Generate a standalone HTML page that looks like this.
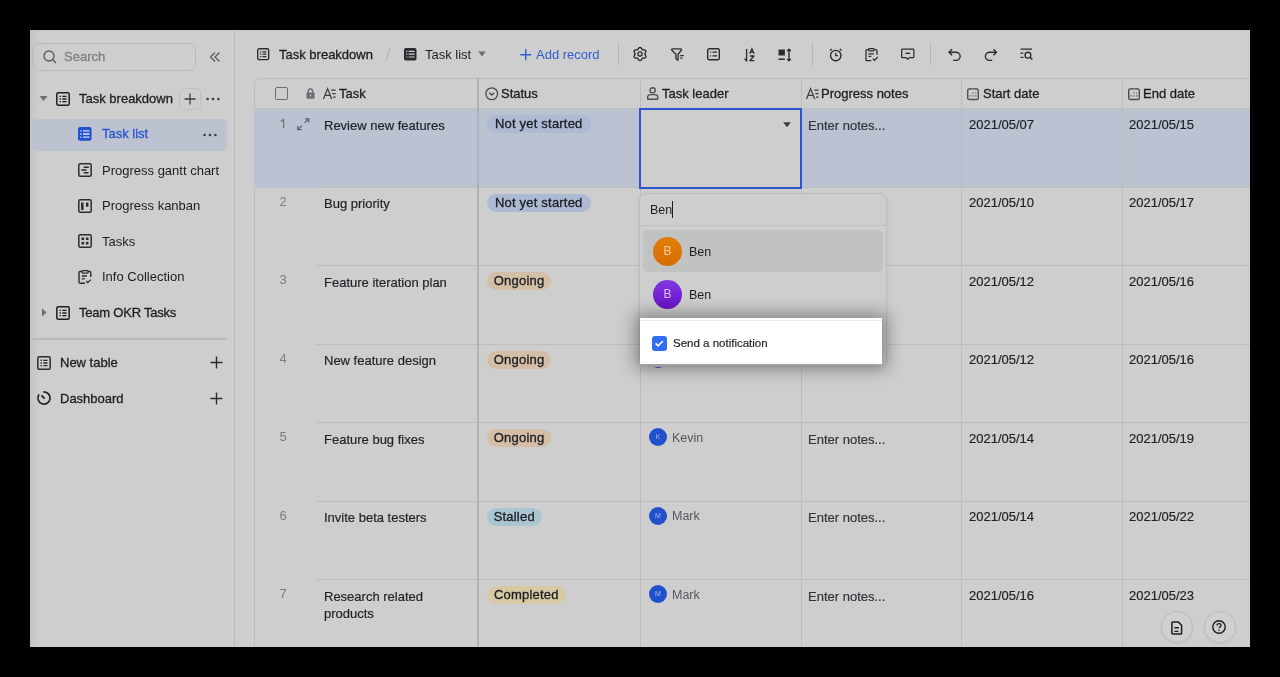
<!DOCTYPE html>
<html><head><meta charset="utf-8">
<style>
*{box-sizing:border-box;margin:0;padding:0}
html,body{width:1280px;height:677px;overflow:hidden;background:#000}
body{-webkit-font-smoothing:antialiased;font-family:"Liberation Sans",sans-serif;font-size:13px;color:#1c1e22;position:relative}
.a{position:absolute;white-space:nowrap;line-height:16px;will-change:transform}
#app{position:absolute;left:30px;top:30px;width:1220px;height:617px;background:#cecece;overflow:hidden}
#side{position:absolute;left:30px;top:30px;width:205px;height:617px;background:linear-gradient(90deg,#c3c3c3 0,#c8c8c8 4px,#cdcdcd 9px,#cecece 14px);border-right:1.5px solid #b9b9b9}
.med{-webkit-text-stroke:0.3px currentColor}
svg.i{position:absolute;overflow:visible;fill:none;stroke:#2a2c30;stroke-width:1.4}
.si{color:#2a2c30}

.hl{width:940px;height:1px;background:#bdbdbd}
.vl{top:77.5px;width:1px;height:570px;background:#bdbdbd}
.num{width:24px;text-align:center;color:#7a7d82;font-size:13px}
.tt{color:#1f2226;-webkit-text-stroke:0.2px currentColor}
.hd{color:#1c1e22}
.badge{height:18px;line-height:18px;padding:0;text-align:center;border-radius:9px;letter-spacing:0.2px;-webkit-text-stroke:0.32px currentColor;color:#1c1e22}
.av{width:18px;height:18px;border-radius:50%;background:#2150cc;color:#a8bde8;font-size:7px;line-height:18px;text-align:center}
.ld{color:#55585e;font-size:12.5px}
.bav{width:28px;height:28px;border-radius:50%;color:#f2c9a0;font-size:12px;line-height:28px;text-align:center}
.fb{width:32px;height:32px;border-radius:50%;border:1px solid #babcc0;background:#d0d0d0;box-shadow:0 1px 3px rgba(0,0,0,0.06)}
</style></head><body>

<div id="app"></div>
<div id="side"></div>
<div class="a" style="left:30px;top:30px;width:1220px;height:1px;background:#c3c4c8"></div>

<!-- search -->
<div class="a" style="left:32px;top:42.5px;width:163.5px;height:28.3px;border:1.5px solid #b9babe;border-radius:7px"></div>
<svg class="i" style="left:43px;top:50px" width="14" height="14" viewBox="0 0 14 14"><circle cx="6" cy="6" r="5" stroke="#5a5d63" stroke-width="1.4"/><path d="M9.8 9.8 L13 13" stroke="#5a5d63" stroke-width="1.5"/></svg>
<div class="a med" style="left:64.3px;top:49px;color:#7e8187">Search</div>
<svg class="i" style="left:209px;top:51px" width="12" height="12" viewBox="0 0 12 12"><path d="M6 1.5 L1.5 6 L6 10.5 M10.5 1.5 L6 6 L10.5 10.5" stroke="#5a5d63" stroke-width="1.3"/></svg>

<!-- Task breakdown -->
<svg style="position:absolute;left:39px;top:95px" width="9" height="7" viewBox="0 0 9 7"><path d="M0.5 1 L8.5 1 L4.5 6 Z" fill="#6b6e74"/></svg>
<svg class="i" style="left:56px;top:92px" width="14" height="14" viewBox="0 0 14 14"><rect x="0.8" y="0.8" width="12.4" height="12.4" rx="1.5" stroke="#1c1e22" stroke-width="1.5"/><path d="M3.5 4.3h1.4M6.3 4.3h4.2M3.5 7h1.4M6.3 7h4.2M3.5 9.7h1.4M6.3 9.7h4.2" stroke="#1c1e22" stroke-width="1.3"/></svg>
<div class="a med" style="left:78.5px;top:91px">Task breakdown</div>
<div class="a" style="left:179px;top:88px;width:21.5px;height:21.5px;border:1.5px solid #bfc0c3;border-radius:5px"></div>
<svg class="i" style="left:183.5px;top:92.5px" width="12" height="12" viewBox="0 0 12 12"><path d="M6 0.5V11.5M0.5 6H11.5" stroke="#3a3d42" stroke-width="1.3"/></svg>
<svg style="position:absolute;left:206px;top:97px" width="14" height="4" viewBox="0 0 14 4"><circle cx="1.6" cy="2" r="1.3" fill="#3a3d42"/><circle cx="7" cy="2" r="1.3" fill="#3a3d42"/><circle cx="12.4" cy="2" r="1.3" fill="#3a3d42"/></svg>

<!-- Task list selected -->
<div class="a" style="left:32px;top:118.5px;width:195px;height:31.5px;background:#bcc2d0;border-radius:5px"></div>
<svg class="i" style="left:77.5px;top:127.2px" width="14" height="14" viewBox="0 0 14 14"><rect x="0" y="0" width="13.6" height="13.8" rx="2" fill="#2152d4" stroke="none"/><path d="M2.2 3.9h1.3M5 3.9h6.5M2.2 7h1.3M5 7h6.5M2.2 10.1h1.3M5 10.1h6.5" stroke="#d9e0f0" stroke-width="1.3"/></svg>
<div class="a med" style="left:101.5px;top:126.3px;color:#2853d2">Task list</div>
<svg style="position:absolute;left:203px;top:132.5px" width="14" height="4" viewBox="0 0 14 4"><circle cx="1.6" cy="2" r="1.3" fill="#3a3d42"/><circle cx="7" cy="2" r="1.3" fill="#3a3d42"/><circle cx="12.4" cy="2" r="1.3" fill="#3a3d42"/></svg>

<!-- gantt -->
<svg class="i" style="left:77.5px;top:163px" width="14" height="14" viewBox="0 0 14 14"><rect x="0.8" y="0.8" width="12.4" height="12.4" rx="1.5" stroke="#2a2c30" stroke-width="1.5"/><path d="M5.6 4.3h5.2M3.4 7h5.1M5.8 9.7h4.7" stroke="#2a2c30" stroke-width="1.5"/></svg>
<div class="a" style="left:101.5px;top:162.5px">Progress gantt chart</div>
<!-- kanban -->
<svg class="i" style="left:77.5px;top:198.5px" width="14" height="14" viewBox="0 0 14 14"><rect x="0.8" y="0.8" width="12.4" height="12.4" rx="1.5" stroke="#2a2c30" stroke-width="1.5"/><path d="M4.3 3.6v7.3M9.2 3.6v4.2" stroke="#2a2c30" stroke-width="2.5"/></svg>
<div class="a" style="left:101.5px;top:198px">Progress kanban</div>
<!-- tasks -->
<svg class="i" style="left:77.5px;top:234px" width="14" height="14" viewBox="0 0 14 14"><rect x="0.8" y="0.8" width="12.4" height="12.4" rx="1.5" stroke="#2a2c30" stroke-width="1.5"/><rect x="3.5" y="3.5" width="2.6" height="2.6" fill="#2a2c30" stroke="none"/><rect x="7.9" y="3.5" width="2.6" height="2.6" fill="#2a2c30" stroke="none"/><rect x="3.5" y="7.9" width="2.6" height="2.6" fill="#2a2c30" stroke="none"/><rect x="7.9" y="7.9" width="2.6" height="2.6" fill="#2a2c30" stroke="none"/></svg>
<div class="a" style="left:101.5px;top:233.5px">Tasks</div>
<!-- info -->
<svg class="i" style="left:77.5px;top:270px" width="14" height="14" viewBox="0 0 14 14"><path d="M4 1.5H2.2C1.5 1.5 1 2 1 2.7V12c0 .7.5 1.2 1.2 1.2H7M10 1.5h1.6c.7 0 1.2.5 1.2 1.2V7" stroke="#2a2c30" stroke-width="1.4"/><rect x="4" y="0.7" width="6" height="2.4" rx="0.8" stroke="#2a2c30" stroke-width="1.3"/><path d="M3.8 6h5M3.8 8.8h3M8.2 11l1.6 1.6 3-3" stroke="#2a2c30" stroke-width="1.3"/></svg>
<div class="a" style="left:101.5px;top:269px">Info Collection</div>
<!-- Team OKR -->
<svg style="position:absolute;left:41px;top:308px" width="6" height="9" viewBox="0 0 6 9"><path d="M1 0.5 L5.5 4.5 L1 8.5 Z" fill="#6b6e74"/></svg>
<svg class="i" style="left:56px;top:305.5px" width="14" height="14" viewBox="0 0 14 14"><rect x="0.8" y="0.8" width="12.4" height="12.4" rx="1.5" stroke="#1c1e22" stroke-width="1.5"/><path d="M3.5 4.3h1.4M6.3 4.3h4.2M3.5 7h1.4M6.3 7h4.2M3.5 9.7h1.4M6.3 9.7h4.2" stroke="#1c1e22" stroke-width="1.3"/></svg>
<div class="a med" style="left:78.5px;top:304.5px;letter-spacing:-0.22px">Team OKR Tasks</div>
<!-- sep -->
<div class="a" style="left:32px;top:338px;width:195px;height:1.5px;background:#bababa"></div>
<!-- new table -->
<svg class="i" style="left:36.5px;top:355.5px" width="14" height="14" viewBox="0 0 14 14"><rect x="0.8" y="0.8" width="12.4" height="12.4" rx="1.5" stroke="#2a2c30" stroke-width="1.5"/><path d="M3.5 4.3h1.4M6.3 4.3h4.2M3.5 7h1.4M6.3 7h4.2M3.5 9.7h1.4M6.3 9.7h4.2" stroke="#2a2c30" stroke-width="1.3"/></svg>
<div class="a med" style="left:59.5px;top:354.5px">New table</div>
<svg class="i" style="left:210px;top:356px" width="13" height="13" viewBox="0 0 13 13"><path d="M6.5 0.5V12.5M0.5 6.5H12.5" stroke="#2a2c30" stroke-width="1.4"/></svg>
<!-- dashboard -->
<svg class="i" style="left:36.5px;top:391px" width="14" height="14" viewBox="0 0 14 14"><path d="M7 0.9A6.1 6.1 0 1 1 1.7 3.95" stroke="#1f2125" stroke-width="1.7" stroke-linecap="round"/><path d="M4.9 4.9L7.2 7.2" stroke="#1f2125" stroke-width="1.7" stroke-linecap="round"/></svg>
<div class="a med" style="left:59.5px;top:390.5px">Dashboard</div>
<svg class="i" style="left:210px;top:392px" width="13" height="13" viewBox="0 0 13 13"><path d="M6.5 0.5V12.5M0.5 6.5H12.5" stroke="#2a2c30" stroke-width="1.4"/></svg>


<!-- main divider -->
<!-- toolbar -->
<svg class="i" style="left:256.6px;top:48px" width="12.4" height="12.4" viewBox="0 0 13 13"><rect x="0.75" y="0.75" width="11.5" height="11.5" rx="1.5" stroke="#2a2c30" stroke-width="1.4"/><path d="M3.2 4h1.3M5.8 4h4M3.2 6.5h1.3M5.8 6.5h4M3.2 9h1.3M5.8 9h4" stroke="#2a2c30" stroke-width="1.2"/></svg>
<div class="a med" style="left:278.6px;top:47px">Task breakdown</div>
<svg class="i" style="left:384px;top:47px" width="7" height="15" viewBox="0 0 7 15"><path d="M5.8 2L1.6 14" stroke="#b3b5b9" stroke-width="1.1"/></svg>
<svg class="i" style="left:403.5px;top:48px" width="12.5" height="12.5" viewBox="0 0 12.5 12.5"><rect x="0" y="0" width="12.5" height="12.5" rx="1.8" fill="#2a2c30" stroke="none"/><path d="M2.2 3.4h1.2M4.6 3.4h6M2.2 6.2h1.2M4.6 6.2h6M2.2 9h1.2M4.6 9h6" stroke="#cfcfcf" stroke-width="1.2"/></svg>
<div class="a" style="left:424.5px;top:47px">Task list</div>
<svg style="position:absolute;left:478px;top:51px" width="8" height="6" viewBox="0 0 8 6"><path d="M0.3 0.5H7.7L4 5.5Z" fill="#6b6e74"/></svg>
<svg class="i" style="left:520px;top:48.5px" width="11.5" height="11.5" viewBox="0 0 11.5 11.5"><path d="M5.75 0.3V11.2M0.3 5.75H11.2" stroke="#2f5ccf" stroke-width="1.4"/></svg>
<div class="a" style="left:536px;top:47px;color:#2f5ccf">Add record</div>
<div class="a" style="left:618px;top:42.5px;width:1px;height:23px;background:#b8b8b8"></div>
<div class="a" style="left:812px;top:42.5px;width:1px;height:23px;background:#b8b8b8"></div>
<div class="a" style="left:930px;top:42.5px;width:1px;height:23px;background:#b8b8b8"></div>
<!-- gear -->
<svg class="i" style="left:633px;top:47.3px" width="14" height="14" viewBox="0 0 14 14"><path d="M7.00 0.40 L7.43 0.48 L7.83 0.70 L8.19 1.04 L8.49 1.45 L8.74 1.86 L8.97 2.24 L9.20 2.55 L9.45 2.76 L9.76 2.87 L10.13 2.92 L10.58 2.92 L11.07 2.93 L11.57 2.99 L12.04 3.13 L12.43 3.37 L12.72 3.70 L12.86 4.11 L12.87 4.57 L12.75 5.05 L12.55 5.51 L12.32 5.94 L12.10 6.33 L11.95 6.68 L11.90 7.00 L11.95 7.32 L12.10 7.67 L12.32 8.06 L12.55 8.49 L12.75 8.95 L12.87 9.43 L12.86 9.89 L12.72 10.30 L12.43 10.63 L12.04 10.87 L11.57 11.01 L11.07 11.07 L10.58 11.08 L10.13 11.08 L9.76 11.13 L9.45 11.24 L9.20 11.45 L8.97 11.76 L8.74 12.14 L8.49 12.55 L8.19 12.96 L7.83 13.30 L7.43 13.52 L7.00 13.60 L6.57 13.52 L6.17 13.30 L5.81 12.96 L5.51 12.55 L5.26 12.14 L5.03 11.76 L4.80 11.45 L4.55 11.24 L4.24 11.13 L3.87 11.08 L3.42 11.08 L2.93 11.07 L2.43 11.01 L1.96 10.87 L1.57 10.63 L1.28 10.30 L1.14 9.89 L1.13 9.43 L1.25 8.95 L1.45 8.49 L1.68 8.06 L1.90 7.67 L2.05 7.32 L2.10 7.00 L2.05 6.68 L1.90 6.33 L1.68 5.94 L1.45 5.51 L1.25 5.05 L1.13 4.57 L1.14 4.11 L1.28 3.70 L1.57 3.37 L1.96 3.13 L2.43 2.99 L2.93 2.93 L3.42 2.92 L3.87 2.92 L4.24 2.87 L4.55 2.76 L4.80 2.55 L5.03 2.24 L5.26 1.86 L5.51 1.45 L5.81 1.04 L6.17 0.70 L6.57 0.48 L7.00 0.40Z" stroke="#2a2c30" stroke-width="1.35" stroke-linejoin="round"/><circle cx="7" cy="7" r="2.1" stroke="#2a2c30" stroke-width="1.35"/></svg>
<!-- filter -->
<svg class="i" style="left:671px;top:47.5px" width="14" height="13" viewBox="0 0 14 13"><path d="M1.6 0.9H9.6C10.4 0.9 10.8 1.7 10.3 2.3L7.1 6.2V11.6C7.1 12.1 6.6 12.3 6.3 12L5.2 11.1C5 10.9 4.9 10.7 4.9 10.4V6.2L0.9 2.3C0.4 1.7 0.8 0.9 1.6 0.9Z" stroke="#2a2c30" stroke-width="1.35" stroke-linejoin="round"/><path d="M9.2 7.7H12.8M9.2 10.2H11.4" stroke="#2a2c30" stroke-width="1.2"/></svg>
<!-- list card -->
<svg class="i" style="left:707px;top:48px" width="13" height="12.5" viewBox="0 0 13 12.5"><rect x="0.7" y="0.7" width="11.6" height="11.1" rx="1.6" stroke="#2a2c30" stroke-width="1.4"/><path d="M3.2 4.1h1M5.4 4.1h4.6M3.2 7.9h1M5.4 7.9h4.6" stroke="#2a2c30" stroke-width="1.2"/></svg>
<!-- sort -->
<svg class="i" style="left:743.5px;top:47.5px" width="12" height="14" viewBox="0 0 12 14"><path d="M2.6 1V13L0.6 10.6" stroke="#2a2c30" stroke-width="1.3" stroke-linejoin="round"/><path d="M5.7 5.8L7.9 0.9 10.1 5.8M6.5 4.2H9.3" stroke="#2a2c30" stroke-width="1.25"/><path d="M5.9 8H10L5.9 12.6H10.3" stroke="#2a2c30" stroke-width="1.35" stroke-linejoin="round"/></svg>
<!-- row height -->
<svg class="i" style="left:778px;top:47.5px" width="14.5" height="14" viewBox="0 0 14.5 14"><rect x="0.5" y="1.5" width="6.4" height="6" fill="#2a2c30" stroke="none"/><path d="M0.5 11.2H6.9" stroke="#2a2c30" stroke-width="1.5"/><path d="M11 1.2V12.8M9.2 3L11 1.2 12.8 3M9.2 11L11 12.8 12.8 11" stroke="#2a2c30" stroke-width="1.4"/></svg>
<!-- alarm -->
<svg class="i" style="left:829px;top:47.5px" width="13.5" height="13.5" viewBox="0 0 14 14"><circle cx="7" cy="7.8" r="5.4" stroke="#2a2c30" stroke-width="1.4"/><path d="M7 5v3h2.2M1 2.6L2.8 1M13 2.6L11.2 1" stroke="#2a2c30" stroke-width="1.3"/></svg>
<!-- clipboard -->
<svg class="i" style="left:865px;top:47.5px" width="13.5" height="13.5" viewBox="0 0 14 14"><path d="M3.6 1.8H2C1.4 1.8 1 2.2 1 2.8V12.2C1 12.8 1.4 13.2 2 13.2H6.5M10 1.8h1.4c.6 0 1 .4 1 1V7" stroke="#2a2c30" stroke-width="1.3"/><rect x="3.8" y="0.6" width="5.6" height="2.4" rx="0.7" stroke="#2a2c30" stroke-width="1.2"/><path d="M3.6 6h5.5M3.6 8.6h3M8 11l1.8 1.8L13.2 9.4" stroke="#2a2c30" stroke-width="1.3"/></svg>
<!-- comment -->
<svg class="i" style="left:900.5px;top:48px" width="13.5" height="13" viewBox="0 0 14 13"><path d="M1.5 0.8H12.5C13 0.8 13.3 1.1 13.3 1.6V9C13.3 9.5 13 9.8 12.5 9.8H8.7L7 11.6 5.3 9.8H1.5C1 9.8.7 9.5.7 9V1.6C.7 1.1 1 .8 1.5.8Z" stroke="#2a2c30" stroke-width="1.3" stroke-linejoin="round"/><path d="M4.5 5.3H9.5" stroke="#2a2c30" stroke-width="1.4"/></svg>
<!-- undo -->
<svg class="i" style="left:948px;top:47.5px" width="13.5" height="13.5" viewBox="0 0 14 14"><path d="M4.2 1.2L1 4.4 4.2 7.6" stroke="#2a2c30" stroke-width="1.4" stroke-linejoin="round"/><path d="M1.2 4.4H8.2C10.7 4.4 12.6 6.3 12.6 8.6 12.6 10.9 10.7 12.8 8.2 12.8H5.5" stroke="#2a2c30" stroke-width="1.4"/></svg>
<!-- redo -->
<svg class="i" style="left:984px;top:47.5px" width="13.5" height="13.5" viewBox="0 0 14 14"><path d="M9.8 1.2L13 4.4 9.8 7.6" stroke="#2a2c30" stroke-width="1.4" stroke-linejoin="round"/><path d="M12.8 4.4H5.8C3.3 4.4 1.4 6.3 1.4 8.6 1.4 10.9 3.3 12.8 5.8 12.8H8.5" stroke="#2a2c30" stroke-width="1.4"/></svg>
<!-- search list -->
<svg class="i" style="left:1019.5px;top:48px" width="13.5" height="13" viewBox="0 0 14 13"><path d="M0.5 1H12.5M0.5 5H3.5M0.5 9.5H3.5" stroke="#2a2c30" stroke-width="1.3"/><circle cx="8.2" cy="7.2" r="3" stroke="#2a2c30" stroke-width="1.4"/><path d="M10.4 9.4L12.8 11.8" stroke="#2a2c30" stroke-width="1.5"/></svg>

<!-- table frame -->
<div class="a" style="left:253.5px;top:77.5px;width:1100px;height:600px;border:1px solid #bdbdbd;border-radius:7px 0 0 0"></div>
<div class="a" style="left:254px;top:108px;width:996px;height:1px;background:#bebebe"></div>
<div class="a" style="left:254px;top:108.5px;width:996px;height:78.5px;background:#bbc2d1"></div>
<svg class="i" style="left:297px;top:117.5px" width="12.5" height="12.5" viewBox="0 0 12.5 12.5"><path d="M8 0.8H11.7V4.5M4.5 11.7H0.8V8" stroke="#5a5f6a" stroke-width="1.3" stroke-linejoin="miter"/><path d="M11.4 1.1L7.6 4.9M1.1 11.4L4.9 7.6" stroke="#5a5f6a" stroke-width="1.3"/></svg>
<div class="a hl" style="left:317px;top:186.5px"></div>
<svg class="i" style="left:280px;top:118.6px" width="5" height="9.4" viewBox="0 0 5 9.4"><path d="M0.6 2.4C1.9 1.9 3 1.2 3.6 0.3V9.3" stroke="#6f7278" stroke-width="1.25" stroke-linejoin="round"/></svg>
<div class="a tt" style="left:324.2px;top:116.5px;line-height:17px">Review new features</div>
<div class="a badge" style="left:487px;top:115.0px;width:103.5px;background:#aebad3">Not yet started</div>
<div class="a tt" style="left:807.6px;top:117.8px;color:#33363b">Enter notes...</div>
<div class="a tt" style="left:968.8px;top:116.6px">2021/05/07</div>
<div class="a tt" style="left:1128.8px;top:116.6px">2021/05/15</div>
<div class="a hl" style="left:317px;top:265.0px"></div>
<div class="a num" style="left:270.5px;top:193.8px">2</div>
<div class="a tt" style="left:324.2px;top:195.0px;line-height:17px">Bug priority</div>
<div class="a badge" style="left:487px;top:193.5px;width:103.5px;background:#aebad3">Not yet started</div>
<div class="a tt" style="left:968.8px;top:195.1px">2021/05/10</div>
<div class="a tt" style="left:1128.8px;top:195.1px">2021/05/17</div>
<div class="a hl" style="left:317px;top:343.5px"></div>
<div class="a num" style="left:270.5px;top:272.3px">3</div>
<div class="a tt" style="left:324.2px;top:273.5px;line-height:17px">Feature iteration plan</div>
<div class="a badge" style="left:487px;top:272.0px;width:64.2px;background:#d4bfa6">Ongoing</div>
<div class="a tt" style="left:968.8px;top:273.6px">2021/05/12</div>
<div class="a tt" style="left:1128.8px;top:273.6px">2021/05/16</div>
<div class="a hl" style="left:317px;top:422.0px"></div>
<div class="a num" style="left:270.5px;top:350.8px">4</div>
<div class="a tt" style="left:324.2px;top:352.0px;line-height:17px">New feature design</div>
<div class="a badge" style="left:487px;top:350.5px;width:64.2px;background:#d4bfa6">Ongoing</div>
<div class="a av" style="left:649px;top:349.8px">B</div>
<div class="a tt" style="left:968.8px;top:352.1px">2021/05/12</div>
<div class="a tt" style="left:1128.8px;top:352.1px">2021/05/16</div>
<div class="a hl" style="left:317px;top:500.5px"></div>
<div class="a num" style="left:270.5px;top:429.3px">5</div>
<div class="a tt" style="left:324.2px;top:430.5px;line-height:17px">Feature bug fixes</div>
<div class="a badge" style="left:487px;top:429.0px;width:64.2px;background:#d4bfa6">Ongoing</div>
<div class="a av" style="left:649px;top:428.3px">K</div>
<div class="a ld" style="left:672.3px;top:429.5px">Kevin</div>
<div class="a tt" style="left:807.6px;top:431.8px;color:#33363b">Enter notes...</div>
<div class="a tt" style="left:968.8px;top:430.6px">2021/05/14</div>
<div class="a tt" style="left:1128.8px;top:430.6px">2021/05/19</div>
<div class="a hl" style="left:317px;top:579.0px"></div>
<div class="a num" style="left:270.5px;top:507.8px">6</div>
<div class="a tt" style="left:324.2px;top:509.0px;line-height:17px">Invite beta testers</div>
<div class="a badge" style="left:487px;top:507.5px;width:54.5px;background:#a9c6d3">Stalled</div>
<div class="a av" style="left:649px;top:506.8px">M</div>
<div class="a ld" style="left:672.3px;top:508.0px">Mark</div>
<div class="a tt" style="left:807.6px;top:510.3px;color:#33363b">Enter notes...</div>
<div class="a tt" style="left:968.8px;top:509.1px">2021/05/14</div>
<div class="a tt" style="left:1128.8px;top:509.1px">2021/05/22</div>
<div class="a hl" style="left:317px;top:657.5px"></div>
<div class="a num" style="left:270.5px;top:586.3px">7</div>
<div class="a tt" style="left:324.2px;top:587.5px;line-height:17px">Research related<br>products</div>
<div class="a badge" style="left:487px;top:586.0px;width:78.7px;background:#d6c9a3">Completed</div>
<div class="a av" style="left:649px;top:585.3px">M</div>
<div class="a ld" style="left:672.3px;top:586.5px">Mark</div>
<div class="a tt" style="left:807.6px;top:588.8px;color:#33363b">Enter notes...</div>
<div class="a tt" style="left:968.8px;top:587.6px">2021/05/16</div>
<div class="a tt" style="left:1128.8px;top:587.6px">2021/05/23</div>
<!-- header -->
<div class="a" style="left:275px;top:87px;width:13px;height:12.8px;border:1.5px solid #6c6f75;border-radius:2px"></div>
<svg class="i" style="left:306px;top:87.5px" width="9" height="11" viewBox="0 0 9 11"><path d="M2.3 5V3.4C2.3 1.9 3.2 1 4.5 1 5.8 1 6.7 1.9 6.7 3.4V5" stroke="#6c7076" stroke-width="1.5"/><rect x="0.4" y="4.6" width="8.2" height="6.2" rx="1" fill="#6c7076" stroke="none"/><rect x="3.9" y="6.7" width="1.3" height="1.6" fill="#cecece" stroke="none"/></svg>
<svg class="i" class="ae" style="left:322.5px;top:87.5px" width="13" height="12" viewBox="0 0 13 12"><path d="M0.5 11L4.6 0.6 8.7 11M2.1 7.3H7.1" stroke="#3a3d42" stroke-width="1.25"/><path d="M8.2 2.1H12.6M9.3 5.6H12.6M10 9.1H12.6" stroke="#3a3d42" stroke-width="1.2"/></svg>
<div class="a hd med" style="left:339px;top:85.5px">Task</div>
<div class="a" style="left:477.3px;top:77.5px;width:2px;height:570px;background:#b1b2b5"></div>
<svg class="i" style="left:484.5px;top:86.5px" width="13.5" height="13.5" viewBox="0 0 14 14"><circle cx="7" cy="7" r="6.1" stroke="#4a4e55" stroke-width="1.4"/><path d="M4.5 5.9L7 8.3 9.5 5.9" stroke="#4a4e55" stroke-width="1.5"/></svg>
<div class="a hd med" style="left:500.5px;top:85.5px">Status</div>
<div class="a vl" style="left:640px"></div>
<svg class="i" style="left:646.8px;top:86.8px" width="11.5" height="13" viewBox="0 0 11.5 13"><circle cx="5.6" cy="3.3" r="2.6" stroke="#4a4e55" stroke-width="1.4"/><path d="M3.4 7.6H7.9C9.6 7.6 10.8 8.8 10.8 10.3V11.4C10.8 11.9 10.4 12.2 9.9 12.2H1.4C0.9 12.2 0.6 11.9 0.6 11.4V10.3C0.6 8.8 1.8 7.6 3.4 7.6Z" stroke="#4a4e55" stroke-width="1.4" stroke-linejoin="round"/></svg>
<div class="a hd med" style="left:662px;top:85.5px">Task leader</div>
<div class="a vl" style="left:801px"></div>
<svg class="i" style="left:805.5px;top:87.5px" width="13" height="12" viewBox="0 0 13 12"><path d="M0.5 11L4.6 0.6 8.7 11M2.1 7.3H7.1" stroke="#3a3d42" stroke-width="1.25"/><path d="M8.2 2.1H12.6M9.3 5.6H12.6M10 9.1H12.6" stroke="#3a3d42" stroke-width="1.2"/></svg>
<div class="a hd med" style="left:821.4px;top:85.5px">Progress notes</div>
<div class="a vl" style="left:961px"></div>
<svg class="i" style="left:967px;top:87.5px" width="12" height="12" viewBox="0 0 12 12"><rect x="0.7" y="0.9" width="10.6" height="10.6" rx="1.6" stroke="#4a4e55" stroke-width="1.4"/><path d="M3.1 0.2V1.6M9 0.2V1.6" stroke="#4a4e55" stroke-width="1.2"/><path d="M5.4 5h1.2M8.2 5h1.2M2.6 7.9h1.2M5.4 7.9h1.2M8.2 7.9h1.2" stroke="#4a4e55" stroke-width="1.2"/></svg>
<div class="a hd med" style="left:982.8px;top:85.5px">Start date</div>
<div class="a vl" style="left:1122px"></div>
<svg class="i" style="left:1128px;top:87.5px" width="12" height="12" viewBox="0 0 12 12"><rect x="0.7" y="0.9" width="10.6" height="10.6" rx="1.6" stroke="#4a4e55" stroke-width="1.4"/><path d="M3.1 0.2V1.6M9 0.2V1.6" stroke="#4a4e55" stroke-width="1.2"/><path d="M5.4 5h1.2M8.2 5h1.2M2.6 7.9h1.2M5.4 7.9h1.2M8.2 7.9h1.2" stroke="#4a4e55" stroke-width="1.2"/></svg>
<div class="a hd med" style="left:1142.8px;top:85.5px">End date</div>
<!-- selected cell -->
<div class="a" style="left:639px;top:108px;width:163px;height:81px;border:2px solid #2b55cc;background:#cecece"></div>
<svg style="position:absolute;left:782.5px;top:121.5px" width="8" height="5.5" viewBox="0 0 8 5.5"><path d="M0.2 0.2H7.8L4 5.3Z" fill="#3a3d42"/></svg>
<!-- dropdown -->
<div class="a" style="left:638.6px;top:192.8px;width:248.4px;height:174px;border:1px solid #bcbcbc;border-radius:7px;background:#cecece;box-shadow:0 2px 6px rgba(0,0,0,0.05)"></div>
<div class="a" style="left:649.5px;top:202px;font-size:12.5px">Ben</div>
<div class="a" style="left:671.5px;top:201px;width:1.2px;height:17px;background:#1c1e22"></div>
<div class="a" style="left:640px;top:225px;width:246px;height:1px;background:#c0c0c0"></div>
<div class="a" style="left:642.5px;top:230px;width:240px;height:42px;border-radius:5px;background:#c1c3c2"></div>
<div class="a bav" style="left:653px;top:237px;width:28.8px;height:28.8px;line-height:28.8px;color:#f3cfa6;background:linear-gradient(180deg,#e27f0c,#d86c02)">B</div>
<div class="a" style="left:689px;top:243.5px;font-size:12.5px">Ben</div>
<div class="a bav" style="left:653px;top:279.5px;width:28.8px;height:28.8px;line-height:28.8px;color:#dac3f2;background:linear-gradient(180deg,#8138e2,#6a12c9)">B</div>
<div class="a" style="left:689px;top:286.5px;font-size:12.5px">Ben</div>
<!-- spotlight -->
<div class="a" style="left:640px;top:318.3px;width:242px;height:46px;background:#fff;box-shadow:0 0 16px 5px rgba(0,0,0,0.34)"></div>
<div class="a" style="left:640px;top:320px;width:242px;height:1px;background:#ececec"></div>
<div class="a" style="left:641px;top:362.3px;width:240px;height:1px;background:#f4f4f4"></div>
<div class="a" style="left:652px;top:336px;width:14.5px;height:14.5px;border-radius:3px;background:#2f6df5"></div>
<svg style="position:absolute;left:652px;top:336px" width="14.5" height="14.5" viewBox="0 0 14.5 14.5"><path d="M3.6 7.4L6.1 9.8 10.9 5" fill="none" stroke="#fff" stroke-width="1.6"/></svg>
<div class="a" style="left:673px;top:335.2px;font-size:11.5px;color:#1f2329;-webkit-text-stroke:0.2px currentColor">Send a notification</div>
<!-- float buttons -->
<div class="a fb" style="left:1161px;top:611px"></div>
<svg class="i" style="left:1171px;top:621px" width="11.5" height="14" viewBox="0 0 11.5 14"><path d="M1.8 0.9H7.2L10.6 4.3V12.2C10.6 12.7 10.2 13.1 9.7 13.1H1.8C1.3 13.1.9 12.7.9 12.2V1.8C.9 1.3 1.3.9 1.8.9Z" stroke="#1c1e22" stroke-width="1.5" stroke-linejoin="round"/><path d="M3.4 6.7H7.9M3.4 10.4H7.4" stroke="#1c1e22" stroke-width="1.4"/></svg>
<div class="a fb" style="left:1203.5px;top:611px"></div>
<svg class="i" style="left:1212.2px;top:620.2px" width="14" height="14" viewBox="0 0 14 14"><circle cx="7" cy="7" r="6.2" stroke="#1c1e22" stroke-width="1.4"/><path d="M5 5.5C5 4.3 5.9 3.6 7 3.6 8.1 3.6 9 4.3 9 5.4 9 6.6 7.1 6.8 7.1 8.2" stroke="#1c1e22" stroke-width="1.3"/><circle cx="7.1" cy="10.2" r="0.8" fill="#1c1e22" stroke="none"/></svg>
<!-- black frame -->
<div class="a" style="left:0;top:0;width:1280px;height:30px;background:#000"></div>
<div class="a" style="left:0;top:647px;width:1280px;height:30px;background:#000"></div>
<div class="a" style="left:0;top:0;width:30px;height:677px;background:#000"></div>
<div class="a" style="left:1250px;top:0;width:30px;height:677px;background:#000"></div>
</body></html>
